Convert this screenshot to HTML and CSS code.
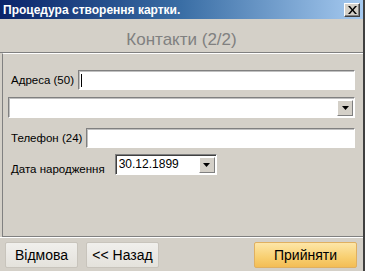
FILE: index.html
```html
<!DOCTYPE html>
<html lang="uk">
<head>
    <meta charset="UTF-8">
    <title>Процедура створення картки.</title>
    <link rel="stylesheet" href="styles.css">
</head>
<body>
    <div class="window">
        <div class="titlebar">
            <span class="title">Процедура створення картки.</span>
            <span class="close-btn">
                <svg width="9" height="8" viewBox="0 0 9 8"><path d="M0 0h2l2.5 3 2.5-3h2l-3.5 4 3.5 4h-2l-2.5-3-2.5 3h-2l3.5-4z" fill="#000"/></svg>
            </span>
        </div>

        <div class="header">Контакти (2/2)</div>

        <div class="panel">
            <div class="row row-address">
                <label class="lbl">Адреса (50)</label>
                <div class="edit"><span class="caret"></span></div>
            </div>

            <div class="combo">
                <div class="combo-text"></div>
                <span class="drop-btn"><svg width="7" height="4" viewBox="0 0 7 4"><path d="M0 0h7l-3.5 4z" fill="#000"/></svg></span>
            </div>

            <div class="row row-phone">
                <label class="lbl">Телефон (24)</label>
                <div class="edit"></div>
            </div>

            <div class="row row-date">
                <label class="lbl">Дата народження</label>
                <div class="date-box">
                    <span class="date-text">30.12.1899</span>
                    <span class="drop-btn"><svg width="7" height="4" viewBox="0 0 7 4"><path d="M0 0h7l-3.5 4z" fill="#000"/></svg></span>
                </div>
            </div>
        </div>

        <div class="footer">
            <button class="btn">Відмова</button>
            <button class="btn">&lt;&lt; Назад</button>
            <span class="spacer"></span>
            <button class="btn btn-ok">Прийняти</button>
        </div>
    </div>
</body>
</html>
```

FILE: styles.css
```css
html, body {
    margin: 0;
    padding: 0;
}

body {
    width: 365px;
    height: 271px;
    overflow: hidden;
    font-family: 'Liberation Sans', Arial, sans-serif;
    background-color: #d4d0c8;
}

.window {
    width: 365px;
    height: 271px;
    box-sizing: border-box;
    display: flex;
    flex-direction: column;
    border-right: 2px solid #404040;
    background-color: #d4d0c8;
}

.titlebar {
    height: 19px;
    display: flex;
    align-items: center;
    justify-content: space-between;
    padding: 0 3px 0 3px;
    background: linear-gradient(to right, #0a246a 0%, #3a6ea5 50%, #a6caf0 100%);
    color: #ffffff;
}

.title {
    font-weight: bold;
    font-size: 12px;
}

.close-btn {
    width: 16px;
    height: 14px;
    box-sizing: border-box;
    display: flex;
    align-items: center;
    justify-content: center;
    background-color: #d4d0c8;
    border: 1px solid;
    border-color: #ffffff #404040 #404040 #ffffff;
    box-shadow: inset -1px -1px 0 #808080;
}

.header {
    height: 34px;
    display: flex;
    align-items: center;
    justify-content: center;
    padding-top: 9px;
    box-sizing: border-box;
    font-size: 17px;
    color: #808080;
    border-bottom: 1px solid #808080;
}

.panel {
    flex: 1;
    border-top: 1px solid #ffffff;
    border-left: 1px solid #808080;
    margin-left: 2px;
    padding: 16px 8px 0 5px;
    border-bottom: 1px solid #808080;
}

.row {
    display: flex;
    align-items: center;
}

.lbl {
    font-size: 11.5px;
    color: #000000;
    padding-left: 3px;
    white-space: nowrap;
}

.edit {
    flex: 1;
    height: 20px;
    box-sizing: border-box;
    background-color: #ffffff;
    border: 1px solid;
    border-color: #808080 #ffffff #ffffff #808080;
    box-shadow: inset 1px 1px 0 #c0c0c0;
    position: relative;
}

.row-address .edit {
    margin-left: 4px;
}

.caret {
    position: absolute;
    left: 2px;
    top: 3px;
    width: 1px;
    height: 13px;
    background-color: #000000;
}

.combo {
    margin-top: 7px;
    height: 21px;
    box-sizing: border-box;
    display: flex;
    background-color: #ffffff;
    border: 1px solid;
    border-color: #808080 #ffffff #ffffff #808080;
    box-shadow: inset 1px 1px 0 #c0c0c0;
    padding: 2px 1px 1px 2px;
}

.combo-text {
    flex: 1;
}

.drop-btn {
    width: 16px;
    box-sizing: border-box;
    display: flex;
    align-items: center;
    justify-content: center;
    background-color: #d4d0c8;
    border: 1px solid;
    border-color: #ffffff #808080 #808080 #ffffff;
}

.row-phone {
    margin-top: 10px;
}

.row-phone .edit {
    margin-left: 4px;
}

.row-date {
    margin-top: 6px;
    align-items: flex-end;
}

.row-date .lbl {
    padding-bottom: 0;
}

.date-box {
    margin-left: 10px;
    width: 102px;
    height: 21px;
    box-sizing: border-box;
    display: flex;
    background-color: #ffffff;
    border: 1px solid;
    border-color: #808080 #ffffff #ffffff #808080;
    box-shadow: inset 1px 1px 0 #404040;
    padding: 2px 1px 1px 2px;
}

.date-text {
    flex: 1;
    font-size: 12px;
    line-height: 14px;
    padding-left: 1px;
}

.footer {
    height: 33px;
    border-top: 1px solid #ffffff;
    display: flex;
    align-items: center;
    padding: 0 6px 0 5px;
    gap: 8px;
}

.spacer {
    flex: 1;
}

.btn {
    height: 26px;
    padding: 0 4px;
    font-family: 'Liberation Sans', Arial, sans-serif;
    font-size: 14px;
    color: #000000;
    background: linear-gradient(to bottom, #f0efec 0%, #e4e2dc 100%);
    border: 1px solid #c8c4bc;
    border-radius: 2px;
    min-width: 73px;
}

.btn-ok {
    width: 103px;
    background: linear-gradient(to bottom, #fde6a8 0%, #f8cf70 60%, #f3bd55 100%);
    border-color: #e0b060;
}
```
